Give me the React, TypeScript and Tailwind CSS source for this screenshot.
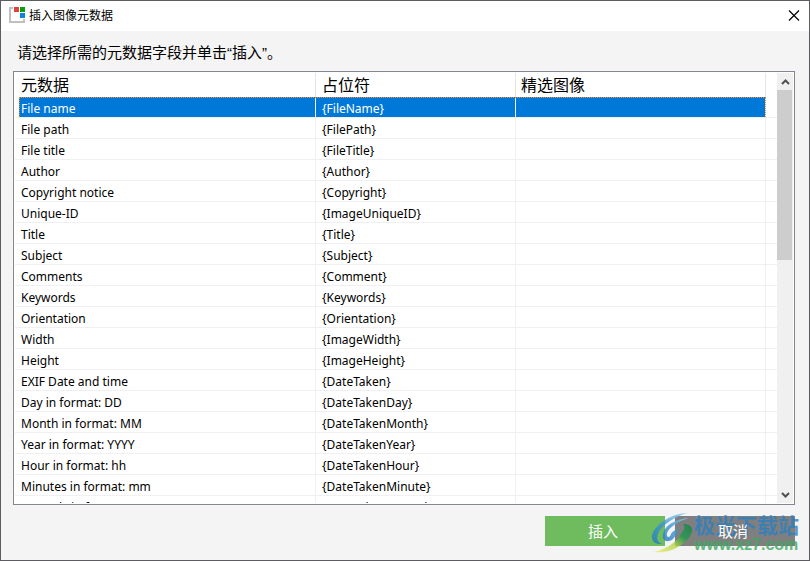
import { useState } from 'react';
import { clsx } from 'clsx';

const fields = [
    { name: 'File name', placeholder: '{FileName}' },
    { name: 'File path', placeholder: '{FilePath}' },
    { name: 'File title', placeholder: '{FileTitle}' },
    { name: 'Author', placeholder: '{Author}' },
    { name: 'Copyright notice', placeholder: '{Copyright}' },
    { name: 'Unique-ID', placeholder: '{ImageUniqueID}' },
    { name: 'Title', placeholder: '{Title}' },
    { name: 'Subject', placeholder: '{Subject}' },
    { name: 'Comments', placeholder: '{Comment}' },
    { name: 'Keywords', placeholder: '{Keywords}' },
    { name: 'Orientation', placeholder: '{Orientation}' },
    { name: 'Width', placeholder: '{ImageWidth}' },
    { name: 'Height', placeholder: '{ImageHeight}' },
    { name: 'EXIF Date and time', placeholder: '{DateTaken}' },
    { name: 'Day in format: DD', placeholder: '{DateTakenDay}' },
    { name: 'Month in format: MM', placeholder: '{DateTakenMonth}' },
    { name: 'Year in format: YYYY', placeholder: '{DateTakenYear}' },
    { name: 'Hour in format: hh', placeholder: '{DateTakenHour}' },
    { name: 'Minutes in format: mm', placeholder: '{DateTakenMinute}' },
    { name: 'Seconds in format: ss', placeholder: '{DateTakenSecond}' },
];

function AppLogo() {
    return (
        <svg width="16" height="18" viewBox="0 0 16 18" shapeRendering="crispEdges" aria-hidden="true">
            <path d="M4 0H0V16H16V12H14V14H2V2H4Z" fill="#c0c0c0" />
            <rect x="5" y="0" width="5" height="5" fill="#dc4444" />
            <rect x="11" y="0" width="5" height="5" fill="#0a9e0a" />
            <rect x="11" y="6" width="5" height="5" fill="#0a84dc" />
        </svg>
    );
}

function TitleBar() {
    return (
        <header className="flex h-[30px] shrink-0 items-center bg-white pl-2">
            <AppLogo />
            <h1 className="ml-1 text-[12px] leading-4 text-black">插入图像元数据</h1>
            <button type="button" aria-label="关闭" className="ml-auto flex h-full w-[30px] items-center justify-center">
                <svg width="12" height="12" viewBox="0 0 12 12" fill="none" stroke="#000" strokeWidth="1.2" aria-hidden="true">
                    <path d="M1 .5L11 10.5M11 .5L1 10.5" />
                </svg>
            </button>
        </header>
    );
}

function FieldTable() {
    const [selected, setSelected] = useState(0);

    return (
        <div className="min-w-0 flex-1 overflow-hidden">
            <table className="w-full table-fixed border-separate border-spacing-0 text-left">
                <colgroup>
                    <col className="w-1" />
                    <col className="w-[297px]" />
                    <col className="w-[200px]" />
                    <col />
                    <col className="w-[11px]" />
                </colgroup>
                <thead>
                    <tr className="h-6 text-[16px] leading-6">
                        <td />
                        <th className="border-r border-[#e5e5e5] p-0 pl-[2px] font-normal">元数据</th>
                        <th className="border-r border-[#e5e5e5] p-0 pl-[6px] font-normal">占位符</th>
                        <th className="border-r border-[#e5e5e5] p-0 pl-[5px] font-normal">精选图像</th>
                        <td />
                    </tr>
                </thead>
                <tbody>
                    {fields.map((field, index) => {
                        const isSelected = index === selected;
                        const cell = clsx(
                            'h-[21px] border-r border-b border-[#f0f0f0] p-0 pt-1',
                            isSelected && 'bg-[#0078d7] text-white'
                        );
                        return (
                            <tr
                                key={field.placeholder}
                                aria-selected={isSelected}
                                onClick={() => setSelected(index)}
                                className="relative text-[12px] leading-4"
                            >
                                <td className="border-b border-[#f0f0f0] p-0" />
                                <td className={clsx(cell, 'pl-[2px]')}>{field.name}</td>
                                <td className={clsx(cell, 'pl-[6px]')}>{field.placeholder}</td>
                                <td className={cell} />
                                <td className="border-b border-[#f0f0f0] p-0">
                                    {isSelected && (
                                        <div className="pointer-events-none absolute top-0 right-[11px] bottom-px left-1 border-t border-r border-l border-dotted border-[#ff8728]" />
                                    )}
                                </td>
                            </tr>
                        );
                    })}
                </tbody>
            </table>
        </div>
    );
}

function ScrollBar() {
    return (
        <div className="flex w-4 shrink-0 flex-col bg-[#f0f0f0]">
            <button type="button" aria-label="向上滚动" className="flex h-[17px] items-center justify-center">
                <svg width="9" height="6" viewBox="0 0 9 6" fill="none" stroke="#505050" strokeWidth="2" aria-hidden="true">
                    <path d="M1 5L4.500 1.500L8 5" />
                </svg>
            </button>
            <div className="flex-1">
                <div className="mr-px h-[43%] bg-[#cdcdcd]" />
            </div>
            <button type="button" aria-label="向下滚动" className="flex h-[17px] items-center justify-center">
                <svg width="9" height="6" viewBox="0 0 9 6" fill="none" stroke="#505050" strokeWidth="2" aria-hidden="true">
                    <path d="M1 1L4.500 4.500L8 1" />
                </svg>
            </button>
        </div>
    );
}

function Watermark() {
    return (
        <div className="pointer-events-none absolute -right-1 -bottom-2 flex items-end opacity-80">
            <svg width="44" height="42" viewBox="0 0 44 42" aria-hidden="true">
                <defs>
                    <linearGradient id="blueSwoosh" x1="0" y1="1" x2="1" y2="0">
                        <stop offset="0" stopColor="#2478bd" />
                        <stop offset="0.500" stopColor="#3d98d4" />
                        <stop offset="1" stopColor="#9dd6f3" />
                    </linearGradient>
                    <linearGradient id="greenSwoosh" x1="0" y1="1" x2="1" y2="0">
                        <stop offset="0" stopColor="#f0ee74" />
                        <stop offset="0.400" stopColor="#b4d548" />
                        <stop offset="0.650" stopColor="#239b4d" />
                        <stop offset="1" stopColor="#12824a" />
                    </linearGradient>
                </defs>
                <path d="M37 1C25 1 12 8 5 17C-1 25 2 33 12 32C6 29 6 24 10 18C16 10 26 5 37 1Z" fill="url(#blueSwoosh)" />
                <path d="M39 6C27 7 17 12 14 19C11 26 14 30 19 29C24 28 27 22 28 17C24 18 22 20 21 22C20 26 16 26 17 21C19 15 29 9 39 6Z" fill="url(#blueSwoosh)" />
                <path d="M33 12C43 12 45 18 38 27C31 35 18 42 4 40C16 37 25 31 29 25C34 18 36 15 33 12Z" fill="url(#greenSwoosh)" />
            </svg>
            <div className="flex flex-col">
                <span className="font-['Noto_Sans_CJK_SC',sans-serif] text-[21px] leading-6 font-bold text-[#2f7fc0]">极光下载站</span>
                <span className="font-['Liberation_Sans',sans-serif] text-[16px] leading-[18px] font-bold text-[#3aab62]">www.xz7.com</span>
            </div>
        </div>
    );
}

export default function App() {
    return (
        <div className="flex h-screen flex-col border border-[#5d5d61] bg-[#f4f4f4] font-['Noto_Sans','Noto_Sans_CJK_SC',sans-serif] text-black">
            <TitleBar />
            <main className="flex min-h-0 flex-1 flex-col px-3 pr-[14px] pb-[14px]">
                <p className="flex h-10 shrink-0 items-center pt-1 pl-1 font-['Liberation_Sans','Noto_Sans_CJK_SC',sans-serif] text-[15px] leading-6">
                    请选择所需的元数据字段并单击“插入”。
                </p>
                <div className="flex min-h-0 flex-1 border border-[#828790] bg-white p-px">
                    <FieldTable />
                    <ScrollBar />
                </div>
                <footer className="relative mt-[11px] flex shrink-0 justify-end gap-[10px] text-[15px] leading-[30px] text-white">
                    <button type="button" className="h-[30px] w-[120px] bg-[#6fbc5e] pr-1">
                        <span className="relative z-10">插入</span>
                    </button>
                    <button type="button" className="h-[30px] w-[120px] bg-[#7f7f7f] pr-1">
                        <span className="relative z-10">取消</span>
                    </button>
                    <Watermark />
                </footer>
            </main>
        </div>
    );
}
